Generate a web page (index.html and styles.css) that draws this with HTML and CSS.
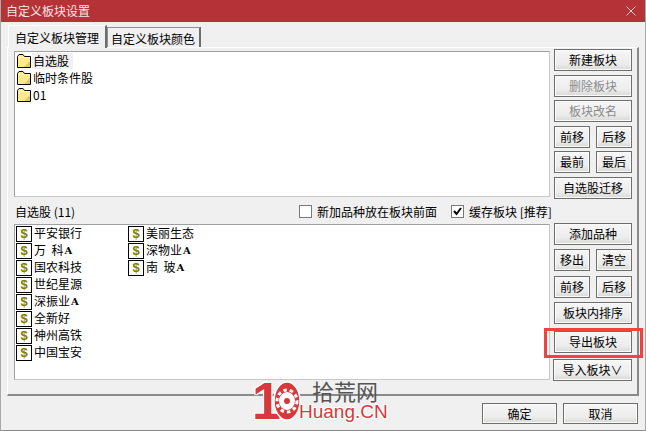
FILE: index.html
```html
<!DOCTYPE html>
<html lang="zh-CN">
<head>
    <meta charset="UTF-8">
    <meta name="viewport" content="width=device-width, initial-scale=1.0">
    <title>自定义板块设置</title>
    <link rel="stylesheet" href="styles.css">
</head>
<body>
    <svg class="icon-defs" width="0" height="0">
        <symbol id="folder" viewBox="0 0 16 14">
            <path d="M1.5 13.5V2.5L3 .5H7L8.5 2.5H14.5V13.5Z" fill="#ffe98a" stroke="#000"/>
            <path d="M2 3.5H14" stroke="#fff7c8"/>
            <path d="M8 13L14 7V13Z" fill="#e6c765"/>
        </symbol>
    </svg>

    <div class="window">
        <div class="titlebar">
            <span>自定义板块设置</span>
            <svg class="close" width="10" height="10" viewBox="0 0 10 10"><path d="M.5 .5L9.5 9.5M9.5 .5L.5 9.5" stroke="#eec9ca" fill="none"/></svg>
        </div>

        <div class="content">
            <div class="tabs">
                <div class="tab active">自定义板块管理</div>
                <div class="tab">自定义板块颜色</div>
            </div>

            <div class="panel">
                <div class="main">
                    <div class="listbox tree">
                        <div class="tree-item"><svg width="16" height="14"><use href="#folder"/></svg><span class="selected">自选股</span></div>
                        <div class="tree-item"><svg width="16" height="14"><use href="#folder"/></svg><span>临时条件股</span></div>
                        <div class="tree-item"><svg width="16" height="14"><use href="#folder"/></svg><span>01</span></div>
                    </div>

                    <div class="options">
                        <span class="count">自选股 (11)</span>
                        <label class="check"><span class="box"></span>新加品种放在板块前面</label>
                        <label class="check"><span class="box"><svg width="9" height="9" viewBox="0 0 9 9"><path d="M1 4L3.5 7L8 1" stroke="#000" stroke-width="2" fill="none"/></svg></span>缓存板块 [推荐]</label>
                    </div>

                    <div class="listbox stocks">
                        <div class="stock"><i class="coin">$</i><span>平安银行</span></div>
                        <div class="stock"><i class="coin">$</i><span>万&nbsp;&nbsp;科</span><b>A</b></div>
                        <div class="stock"><i class="coin">$</i><span>国农科技</span></div>
                        <div class="stock"><i class="coin">$</i><span>世纪星源</span></div>
                        <div class="stock"><i class="coin">$</i><span>深振业</span><b>A</b></div>
                        <div class="stock"><i class="coin">$</i><span>全新好</span></div>
                        <div class="stock"><i class="coin">$</i><span>神州高铁</span></div>
                        <div class="stock"><i class="coin">$</i><span>中国宝安</span></div>
                        <div class="stock"><i class="coin">$</i><span>美丽生态</span></div>
                        <div class="stock"><i class="coin">$</i><span>深物业</span><b>A</b></div>
                        <div class="stock"><i class="coin">$</i><span>南&nbsp;&nbsp;玻</span><b>A</b></div>
                    </div>
                </div>

                <div class="sidebar">
                    <div class="btn-group top">
                        <button>新建板块</button>
                        <button disabled>删除板块</button>
                        <button disabled>板块改名</button>
                        <div class="btn-row"><button>前移</button><button>后移</button></div>
                        <div class="btn-row"><button>最前</button><button>最后</button></div>
                        <button>自选股迁移</button>
                    </div>
                    <div class="btn-group bottom">
                        <button>添加品种</button>
                        <div class="btn-row"><button>移出</button><button>清空</button></div>
                        <div class="btn-row"><button>前移</button><button>后移</button></div>
                        <button>板块内排序</button>
                        <button class="export">导出板块</button>
                        <button class="import">导入板块∨</button>
                    </div>
                </div>
            </div>

            <div class="footer">
                <button>确定</button>
                <button>取消</button>
            </div>
        </div>

        <div class="watermark">
            <span class="wm-ten">1</span>
            <svg class="wm-gear" width="28" height="40" viewBox="0 0 28 40">
                <ellipse cx="14" cy="20" rx="13" ry="19" fill="#d8383c" stroke="#fff" stroke-width="1.5"/>
                <ellipse cx="14" cy="20" rx="8" ry="9" fill="#fff"/>
                <ellipse cx="14" cy="20" rx="10" ry="11" fill="none" stroke="#fff" stroke-width="3" stroke-dasharray="3.5 3"/>
                <circle cx="14" cy="20" r="3" fill="#d8383c"/>
            </svg>
            <span class="wm-name">拾荒网</span>
            <span class="wm-site">Huang.CN</span>
        </div>
    </div>
</body>
</html>
```

FILE: styles.css
```css
body {
    margin: 0;
    font-family: "Noto Sans CJK SC", "Liberation Sans", sans-serif;
    font-size: 12px;
    color: #000;
    background: #f0f0f0;
}
.icon-defs {
    display: block;
    height: 0;
}
.window {
    position: relative;
    width: 646px;
    height: 431px;
    box-sizing: border-box;
    border-left: 1px solid #a9a9a9;
    border-right: 1px solid #a9a9a9;
    border-bottom: 1px solid #8a8a8a;
    overflow: hidden;
}
.titlebar {
    display: flex;
    justify-content: space-between;
    align-items: center;
    height: 22px;
    margin: 0 -1px;
    padding: 0 10px 0 6px;
    background: #b53236;
    color: #f6e6e6;
    line-height: 20px;
}
.content {
    padding: 0 6px 0 6px;
}
.tabs {
    display: flex;
    height: 25px;
    align-items: flex-end;
    margin-left: 1px;
}
.tab {
    height: 19px;
    line-height: 21px;
    padding: 0 4px 0 3px;
    border: 1px solid #8f8f8f;
    border-right: 2px solid #6d6d6d;
    border-bottom: none;
    background: #f0f0f0;
}
.tab.active {
    height: 22px;
    line-height: 23px;
    padding: 0 6px;
    border-left-color: #fff;
    border-top-color: #fff;
    position: relative;
    top: 1px;
    z-index: 1;
}
.panel {
    display: flex;
    gap: 4px;
    width: 632px;
    height: 349px;
    box-sizing: border-box;
    padding: 3px 5px 14px 6px;
    border: 1px solid #fff;
    border-right: 2px solid #8a8a8a;
    border-bottom: 2px solid #8a8a8a;
}
.main {
    display: flex;
    flex-direction: column;
    width: 536px;
}
.listbox {
    box-sizing: border-box;
    background: #fff;
    border: 1px solid #a0a0a0;
    border-right-color: #c8c8c8;
    border-bottom-color: #c8c8c8;
}
.tree {
    height: 146px;
    padding: 0 0 0 1px;
}
.tree-item {
    display: flex;
    align-items: center;
    height: 17.4px;
}
.tree-item span {
    padding: 0 1px;
    line-height: 16px;
}
.tree-item .selected {
    background: #f0f0f0;
    padding-right: 4px;
}
.options {
    display: flex;
    align-items: center;
    height: 27px;
    padding-top: 2px;
    box-sizing: border-box;
}
.count {
    width: 284px;
    padding-left: 1px;
    flex-shrink: 0;
}
.check {
    display: flex;
    align-items: center;
    gap: 5px;
    margin-right: 14px;
    white-space: nowrap;
}
.box {
    display: flex;
    align-items: center;
    justify-content: center;
    width: 11px;
    height: 11px;
    background: #fff;
    border: 1px solid #7a7a7a;
}
.stocks {
    display: grid;
    grid-template-rows: repeat(8, 17px);
    grid-auto-flow: column;
    grid-auto-columns: 112px;
    height: 156px;
    padding: 0 0 0 1px;
}
.stock {
    display: flex;
    align-items: center;
    gap: 1px;
    white-space: nowrap;
}
.stock span {
    margin-top: -2px;
}
.stock b {
    font-family: "DejaVu Serif", serif;
    font-size: 10px;
}
.coin {
    box-sizing: border-box;
    width: 16px;
    height: 16px;
    margin-right: 1px;
    border: 1px solid #000;
    background: #fff;
    color: #808000;
    font-family: "Liberation Sans", sans-serif;
    font-size: 13px;
    font-style: normal;
    font-weight: bold;
    line-height: 14px;
    text-align: center;
}
.sidebar {
    width: 78px;
    margin-top: -2px;
}
.btn-group {
    display: flex;
    flex-direction: column;
}
.top {
    gap: 3.6px;
}
.bottom {
    gap: 4.4px;
    margin-top: 24px;
}
.btn-row {
    display: flex;
    justify-content: space-between;
}
.btn-row button {
    width: 36px;
}
button {
    box-sizing: border-box;
    height: 22px;
    padding: 0;
    font: inherit;
    line-height: 18px;
    color: #000;
    background: linear-gradient(#f6f6f6, #ececec 70%, #d8d8d4);
    border: 1px solid #6e6e6e;
    box-shadow: inset 0 0 0 1px #fbfbfb;
}
button:disabled {
    color: #8a8a8a;
}
.export {
    position: relative;
    margin-top: 2px;
}
/* red marker drawn round the export button */
.export::after {
    content: "";
    position: absolute;
    left: -11px;
    top: -4px;
    width: 93px;
    height: 24px;
    border: 3px solid #f44040;
}
.import {
    margin-top: 2px;
    margin-left: -1px;
}
.footer {
    display: flex;
    justify-content: flex-end;
    gap: 6px;
    padding: 7px 1px 0 0;
}
.footer button {
    width: 75px;
    height: 21px;
}
/* site watermark sits over the dialog */
.watermark {
    position: absolute;
    left: 254px;
    top: 380px;
    width: 132px;
    height: 42px;
}
.wm-ten {
    position: absolute;
    left: -3px;
    top: -1px;
    color: #d8383c;
    font-family: "Liberation Sans", sans-serif;
    font-size: 52px;
    font-weight: bold;
    line-height: 44px;
    text-shadow: 1px 1px 0 #fff, -1px -1px 0 #fff, 1px -1px 0 #fff, -1px 1px 0 #fff;
}
.wm-gear {
    position: absolute;
    left: 18px;
    top: 1px;
}
.wm-name {
    position: absolute;
    left: 57px;
    top: -1px;
    color: #555;
    font-size: 22px;
    line-height: 23px;
    white-space: nowrap;
}
.wm-site {
    position: absolute;
    left: 44px;
    top: 22px;
    color: #d8383c;
    font-family: "Liberation Sans", sans-serif;
    font-size: 19px;
    line-height: 20px;
    white-space: nowrap;
    text-shadow: 1px 1px 0 #fff, -1px -1px 0 #fff, 1px -1px 0 #fff, -1px 1px 0 #fff;
}
```
